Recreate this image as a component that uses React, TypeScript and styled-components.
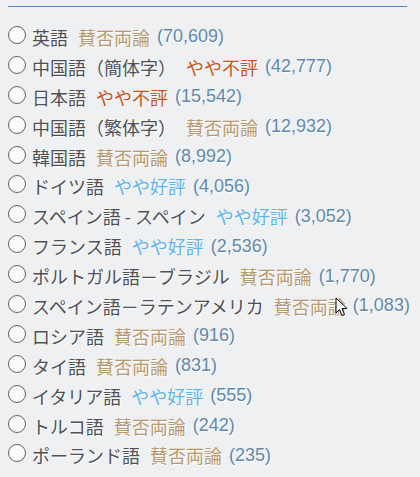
import React from "react";
import styled, { createGlobalStyle } from "styled-components";

const Global = createGlobalStyle`
  html, body { margin: 0; padding: 0; background: #eff0f2; }
  body { font-family: "Liberation Sans", Arial, "Noto Sans CJK JP", sans-serif; }
`;

const Page = styled.div`
  position: relative;
  width: 420px;
  height: 477px;
  padding: 6px 13px 0 8px;
  box-sizing: border-box;
  overflow: hidden;
`;

const Rule = styled.div`
  height: 1px;
  background: #4a89c2;
  margin-bottom: 15px;
`;

const List = styled.div`
  display: flex;
  flex-direction: column;
`;

const Row = styled.label`
  display: flex;
  align-items: center;
  height: 29.9px;
  font-size: 18px;
  text-shadow: 1px 1px 1px rgba(255, 255, 255, 0.95);
  white-space: nowrap;
`;

const Radio = styled.span`
  width: 16px;
  height: 16px;
  border: 1.6px solid #626262;
  border-radius: 50%;
  background: #fbfbfb;
  flex: none;
  margin-right: 6px;
  margin-top: -4px;
`;

const Lang = styled.span`
  color: #4f5154;
  font-family: "Noto Sans CJK JP", sans-serif;
`;

const Rating = styled.span<{ $tone: "mixed" | "neg" | "pos" }>`
  margin-left: 10px;
  font-family: "Noto Sans CJK JP", sans-serif;
  color: ${(p) =>
    p.$tone === "mixed" ? "#b99a6e" : p.$tone === "neg" ? "#c9531e" : "#5fb3ee"};
`;

const Count = styled.span`
  margin-left: 7px;
  font-size: 18px;
  color: #6189ad;
  font-family: "Liberation Sans", Arial, sans-serif;
`;

const Cursor = styled.svg`
  position: absolute;
  left: 335px;
  top: 297px;
`;

type Tone = "mixed" | "neg" | "pos";
const labels: Record<Tone, string> = { mixed: "賛否両論", neg: "やや不評", pos: "やや好評" };

const rows: [string, Tone, string][] = [
  ["英語", "mixed", "70,609"],
  ["中国語（簡体字）", "neg", "42,777"],
  ["日本語", "neg", "15,542"],
  ["中国語（繁体字）", "mixed", "12,932"],
  ["韓国語", "mixed", "8,992"],
  ["ドイツ語", "pos", "4,056"],
  ["スペイン語 - スペイン", "pos", "3,052"],
  ["フランス語", "pos", "2,536"],
  ["ポルトガル語－ブラジル", "mixed", "1,770"],
  ["スペイン語－ラテンアメリカ", "mixed", "1,083"],
  ["ロシア語", "mixed", "916"],
  ["タイ語", "mixed", "831"],
  ["イタリア語", "pos", "555"],
  ["トルコ語", "mixed", "242"],
  ["ポーランド語", "mixed", "235"],
];

export default function App() {
  return (
    <>
      <Global />
      <Page>
        <Rule />
        <List>
          {rows.map(([lang, tone, count]) => (
            <Row key={lang}>
              <Radio />
              <Lang>{lang}</Lang>
              <Rating $tone={tone}>{labels[tone]}</Rating>
              <Count>({count})</Count>
            </Row>
          ))}
        </List>
        <Cursor width="14" height="20" viewBox="0 0 14 20">
          <path d="M1 1 L1 16 L4.5 12.5 L7 18.5 L9.5 17.5 L7 11.5 L12 11.5 Z" fill="#fff" stroke="#000" strokeWidth="1" strokeLinejoin="round" />
        </Cursor>
      </Page>
    </>
  );
}
